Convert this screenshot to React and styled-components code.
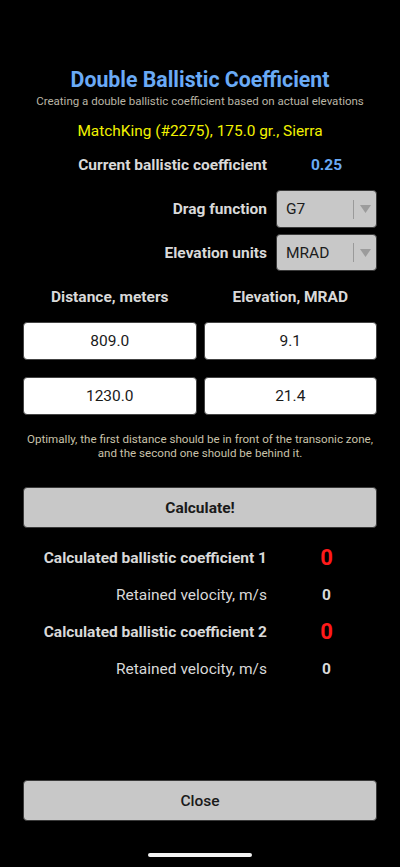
import styled, { createGlobalStyle } from "styled-components";

const GlobalStyle = createGlobalStyle`
    html, body {
        margin: 0;
        padding: 0;
        background: #000;
    }
    body {
        font-family: Roboto, "Liberation Sans", sans-serif;
    }
`;

const Page = styled.div`
    width: 400px;
    height: 867px;
    box-sizing: border-box;
    background: #000;
    padding: 67px 23px 10px;
    display: flex;
    flex-direction: column;
`;

const Title = styled.h1`
    margin: 0;
    text-align: center;
    color: #6aaaf6;
    font-size: 21.3px;
    font-weight: 700;
    line-height: 26px;
`;

const Subtitle = styled.div`
    text-align: center;
    color: #bab5a5;
    font-size: 11.5px;
    line-height: 14px;
    margin-top: 1px;
`;

const Bullet = styled.div`
    text-align: center;
    color: #f2f200;
    font-size: 15.4px;
    line-height: 18px;
    margin-top: 14px;
`;

const InfoRow = styled.div`
    display: grid;
    grid-template-columns: 244px 101px;
    column-gap: 9px;
    align-items: center;
    height: ${(p) => p.$h || 37}px;
    margin-top: ${(p) => p.$mt || 0}px;
`;

const Label = styled.div`
    text-align: right;
    color: #d9d9d9;
    font-size: 15.5px;
    font-weight: ${(p) => (p.$bold ? 700 : 400)};
`;

const Value = styled.div`
    text-align: center;
    color: ${(p) => p.$color || "#d9d9d9"};
    font-size: ${(p) => p.$size || 15.5}px;
    font-weight: 700;
`;

const Select = styled.div`
    height: 100%;
    box-sizing: border-box;
    background: #c8c8c8;
    border: 1px solid #3a3a3a;
    border-radius: 4px;
    display: flex;
    align-items: center;
    padding-left: 9px;
    color: #1c1c1c;
    font-size: 15.5px;
`;

const SelectText = styled.span`
    flex: 1;
`;

const Divider = styled.span`
    width: 1px;
    height: 19px;
    background: #9a9a9a;
`;

const Arrow = styled.span`
    width: 22px;
    display: flex;
    justify-content: center;
`;

const Columns = styled.div`
    display: grid;
    grid-template-columns: 1fr 1fr;
    column-gap: 7px;
    row-gap: 17px;
    margin-top: ${(p) => p.$mt || 0}px;
`;

const ColumnHead = styled.div`
    text-align: center;
    color: #d9d9d9;
    font-size: 15.5px;
    font-weight: 700;
    line-height: 18px;
`;

const Field = styled.div`
    height: 38px;
    box-sizing: border-box;
    background: #fff;
    border: 1px solid #444;
    border-radius: 4px;
    display: flex;
    align-items: center;
    justify-content: center;
    color: #1a1a1a;
    font-size: 15.5px;
`;

const Note = styled.p`
    margin: 17px 0 0;
    text-align: center;
    color: #c9c2aa;
    font-size: 11.6px;
    line-height: 14px;
`;

const Button = styled.button`
    display: block;
    width: 100%;
    height: 41px;
    flex-shrink: 0;
    margin-top: ${(p) => p.$mt || 0}px;
    background: #c8c8c8;
    border: 1px solid #3a3a3a;
    border-radius: 4px;
    color: #1a1a1a;
    font-family: Roboto, "Liberation Sans", sans-serif;
    font-size: 15.5px;
    font-weight: ${(p) => (p.$bold ? 700 : 500)};
    cursor: pointer;
`;

const Spacer = styled.div`
    flex: 1;
`;

const HomeBar = styled.div`
    width: 104px;
    height: 4px;
    flex-shrink: 0;
    border-radius: 2px;
    background: #f2f2f2;
    margin: 32px auto 0;
`;

const Dropdown = ({ value }) => (
    <Select>
        <SelectText>{value}</SelectText>
        <Divider />
        <Arrow>
            <svg width="11" height="8" viewBox="0 0 11 8">
                <path d="M0 0 L11 0 L5.5 8 Z" fill="#9c9c9c" />
            </svg>
        </Arrow>
    </Select>
);

const results = [
    { n: 1, bc: "0", vel: "0" },
    { n: 2, bc: "0", vel: "0" },
];

const App = () => {
    return (
        <>
            <GlobalStyle />
            <Page>
                <Title>Double Ballistic Coefficient</Title>
                <Subtitle>Creating a double ballistic coefficient based on actual elevations</Subtitle>
                <Bullet>MatchKing (#2275), 175.0 gr., Sierra</Bullet>

                <InfoRow $h={24} $mt={13}>
                    <Label $bold>Current ballistic coefficient</Label>
                    <Value $color="#6aaaf6">0.25</Value>
                </InfoRow>
                <InfoRow $h={38} $mt={13}>
                    <Label $bold>Drag function</Label>
                    <Dropdown value="G7" />
                </InfoRow>
                <InfoRow $h={37} $mt={6}>
                    <Label $bold>Elevation units</Label>
                    <Dropdown value="MRAD" />
                </InfoRow>

                <Columns $mt={17}>
                    <ColumnHead>Distance, meters</ColumnHead>
                    <ColumnHead>Elevation, MRAD</ColumnHead>
                </Columns>
                <Columns $mt={16}>
                    <Field>809.0</Field>
                    <Field>9.1</Field>
                    <Field>1230.0</Field>
                    <Field>21.4</Field>
                </Columns>

                <Note>
                    Optimally, the first distance should be in front of the transonic zone,
                    <br />
                    and the second one should be behind it.
                </Note>

                <Button $bold $mt={27}>Calculate!</Button>

                {results.map((r, i) => (
                    <div key={r.n}>
                        <InfoRow $h={37} $mt={i === 0 ? 11 : 0}>
                            <Label $bold>Calculated ballistic coefficient {r.n}</Label>
                            <Value $color="#ff1a1a" $size={22}>{r.bc}</Value>
                        </InfoRow>
                        <InfoRow $h={37}>
                            <Label>Retained velocity, m/s</Label>
                            <Value>{r.vel}</Value>
                        </InfoRow>
                    </div>
                ))}

                <Spacer />
                <Button>Close</Button>
                <HomeBar />
            </Page>
        </>
    );
};

export default App;
